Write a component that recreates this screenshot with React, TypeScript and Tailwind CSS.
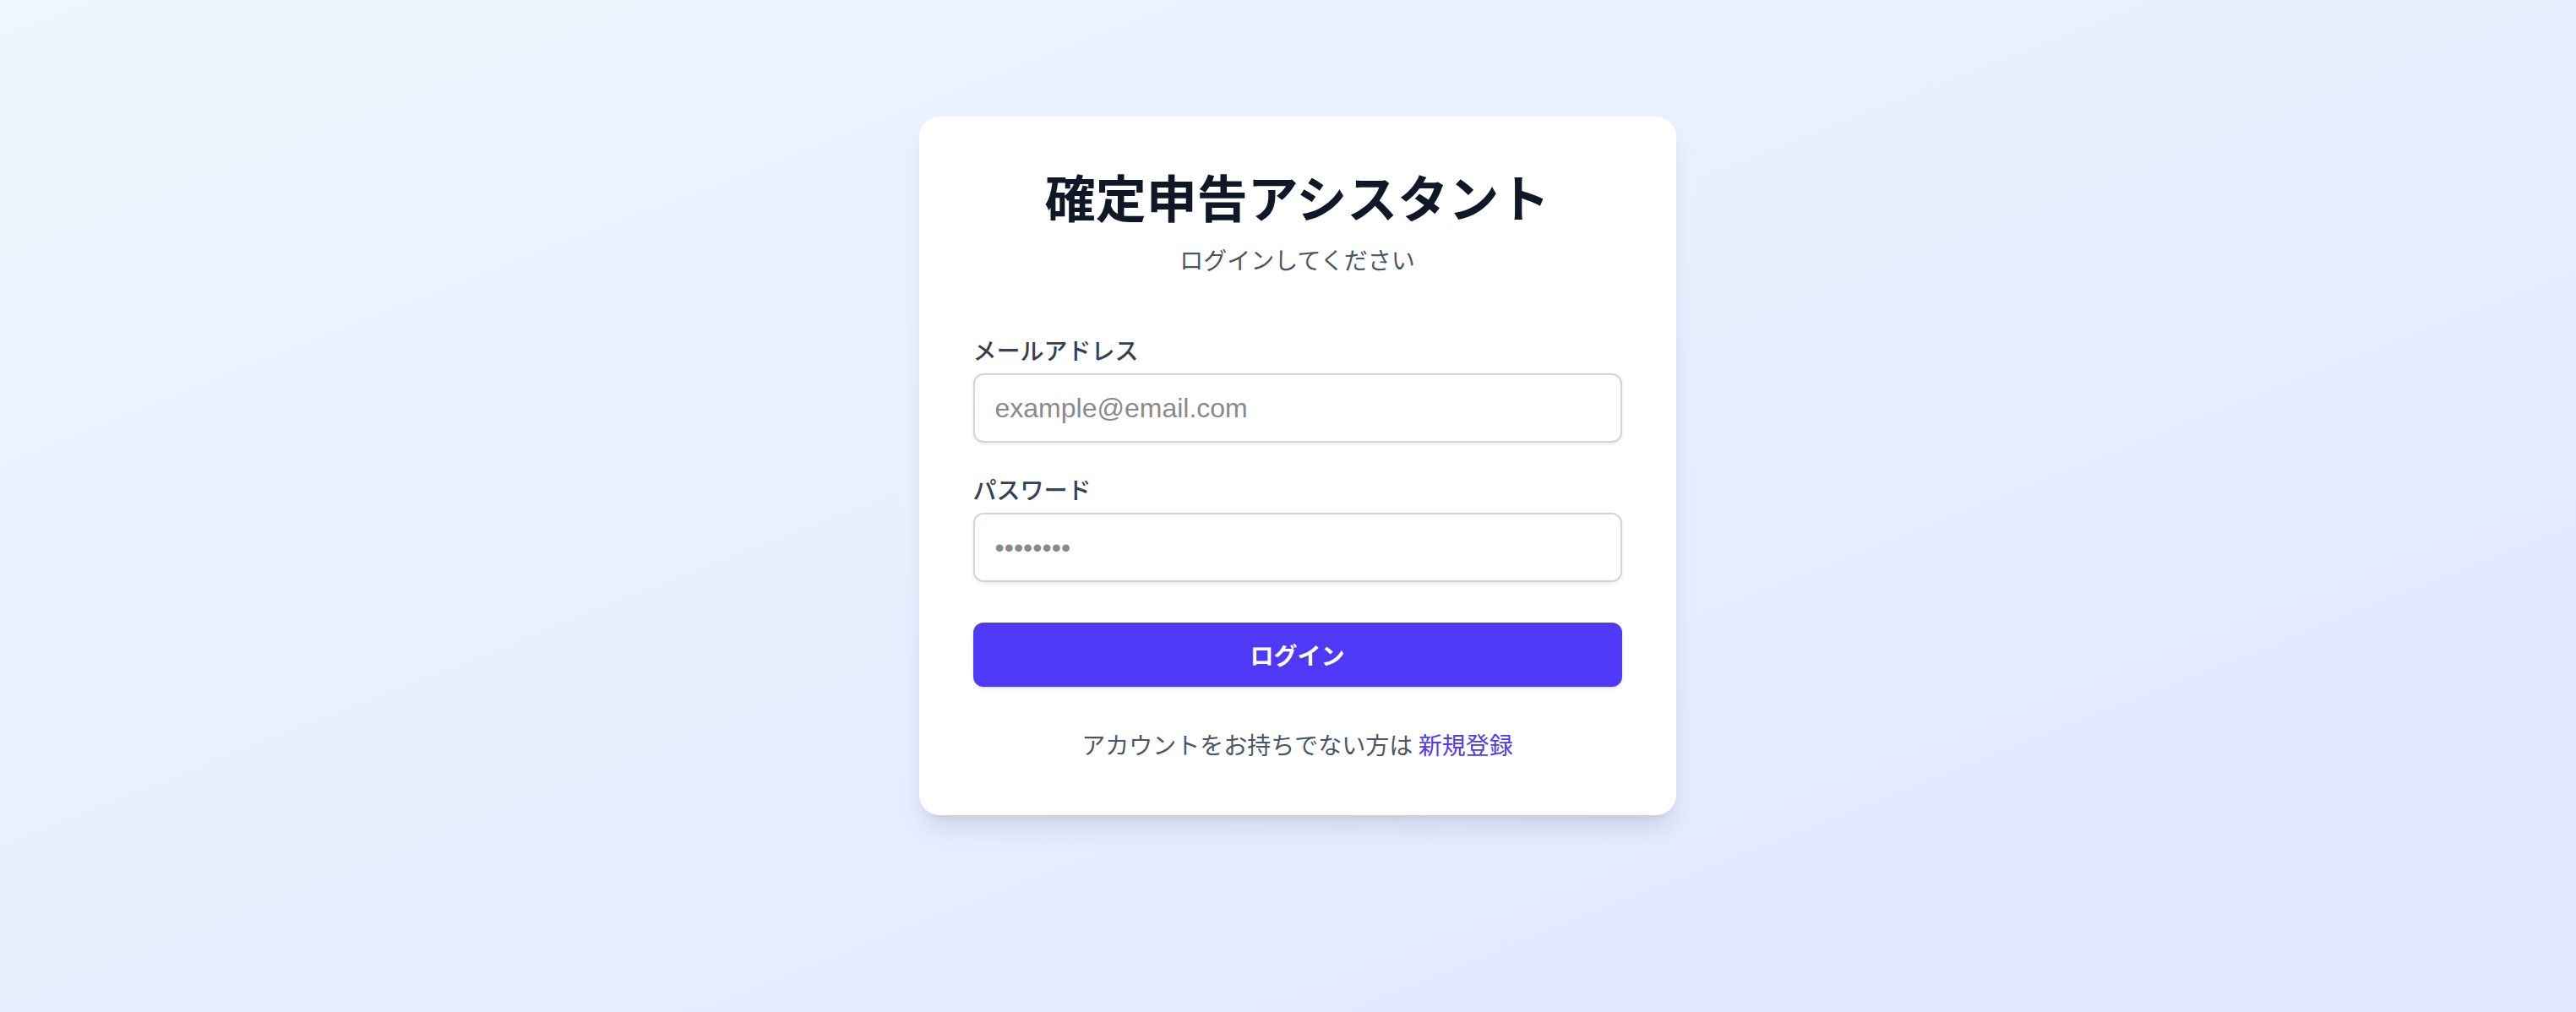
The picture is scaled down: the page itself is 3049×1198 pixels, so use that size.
import React from "react";

export default function App() {
  return (
    <div className="min-h-screen w-full bg-gradient-to-br from-blue-50 to-indigo-100 font-['Liberation_Sans','Noto_Sans_CJK_JP',sans-serif]">
      <div className="flex justify-center pt-[138px] pl-[22px] pb-[20px]">
        <div className="w-[896px] rounded-3xl bg-white p-[64px] shadow-[0_20px_30px_-6px_rgba(0,0,0,0.1),0_8px_12px_-8px_rgba(0,0,0,0.1)]">
          <div className="text-center">
            <h1 className="text-[60px] leading-[60px] font-bold text-gray-900 font-['Noto_Sans_CJK_JP',sans-serif]">
              確定申告アシスタント
            </h1>
            <p className="mt-[25px] text-[28px] leading-[40px] text-gray-600 font-['Noto_Sans_CJK_JP',sans-serif]">
              ログインしてください
            </p>
          </div>
          <form className="mt-[67px] flex flex-col">
            <div>
              <label className="block text-[28px] leading-[40px] font-medium text-gray-700 font-['Noto_Sans_CJK_JP',sans-serif]">
                メールアドレス
              </label>
              <input
                type="email"
                placeholder="example@email.com"
                className="mt-[8px] block h-[82px] w-full rounded-xl border-2 border-gray-300 bg-white px-[24px] text-[32px] text-gray-900 shadow-[0_2px_4px_rgba(0,0,0,0.08)] outline-none placeholder:text-[#8a8a8a] font-['Liberation_Sans',sans-serif]"
              />
            </div>
            <div className="mt-[35px]">
              <label className="block text-[28px] leading-[40px] font-medium text-gray-700 font-['Noto_Sans_CJK_JP',sans-serif]">
                パスワード
              </label>
              <input
                type="password"
                placeholder="••••••••"
                className="mt-[8px] block h-[82px] w-full rounded-xl border-2 border-gray-300 bg-white px-[24px] text-[32px] text-gray-900 shadow-[0_2px_4px_rgba(0,0,0,0.08)] outline-none placeholder:text-[#8a8a8a] font-['Liberation_Sans',sans-serif]"
              />
            </div>
            <button
              type="button"
              className="mt-[48px] flex h-[76px] w-full items-center justify-center rounded-xl bg-indigo-600 text-[28px] font-semibold text-white shadow-[0_2px_4px_rgba(0,0,0,0.1)] font-['Noto_Sans_CJK_JP',sans-serif]"
            >
              ログイン
            </button>
          </form>
          <p className="mt-[48px] text-center text-[28px] leading-[40px] text-gray-600 font-['Noto_Sans_CJK_JP',sans-serif]">
            アカウントをお持ちでない方は{" "}
            <a href="#" className="font-normal text-indigo-600">
              新規登録
            </a>
          </p>
        </div>
      </div>
    </div>
  );
}
